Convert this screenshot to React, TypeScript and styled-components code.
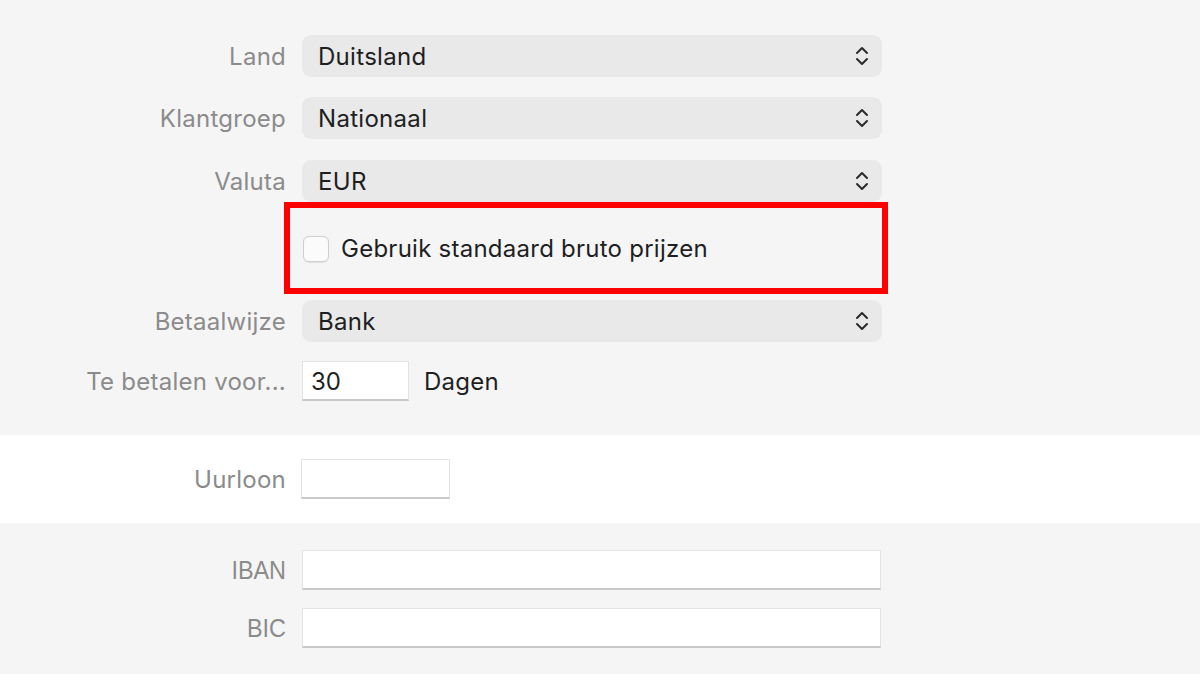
import React from "react";
import styled, { createGlobalStyle } from "styled-components";

const Global = createGlobalStyle`
  html, body { margin: 0; padding: 0; background: #f5f5f5; }
  body { font-family: Inter, "Noto Sans", sans-serif; -webkit-font-smoothing: antialiased; }
`;

const Page = styled.div`
  width: 1200px;
  height: 674px;
  overflow: hidden;
  display: flex;
  flex-direction: column;
`;

const Section = styled.section<{ $white?: boolean; $pt: number; $h: number }>`
  box-sizing: border-box;
  background: ${(p) => (p.$white ? "#ffffff" : "#f5f5f5")};
  padding-top: ${(p) => p.$pt}px;
  height: ${(p) => p.$h}px;
  display: flex;
  flex-direction: column;
`;

const Row = styled.div<{ $h: number; $mt?: number }>`
  display: grid;
  grid-template-columns: 286px 580px;
  column-gap: 16px;
  align-items: center;
  height: ${(p) => p.$h}px;
  margin-top: ${(p) => p.$mt ?? 0}px;
`;

const Label = styled.div`
  text-align: right;
  color: #8b8b8b;
  font-size: 24px;
  letter-spacing: 0.25px;
`;

const NarrowLabel = styled.div`
  text-align: right;
  color: #8b8b8b;
  font-family: "Liberation Sans", Arial, sans-serif;
  font-size: 26px;
  transform: scaleX(0.9);
  transform-origin: right center;
`;

const Select = styled.div`
  box-sizing: border-box;
  height: 42px;
  width: 580px;
  background: #e9e9e9;
  border-radius: 9px;
  display: flex;
  align-items: center;
  justify-content: space-between;
  padding: 0 12px 0 16px;
  font-size: 24px;
  color: #1f1f1f;
  letter-spacing: 0.3px;
`;

const Chevrons = styled.svg`
  width: 16px;
  height: 22px;
`;

const CheckRow = styled.div`
  display: flex;
  align-items: center;
  gap: 12px;
`;

const Highlight = styled.div`
  box-sizing: border-box;
  height: 92px;
  margin: 0 -6px 0 -18px;
  border: 6px solid #ff0000;
  display: flex;
  align-items: center;
  padding-left: 13px;
  padding-top: 1px;
`;

const CheckBox = styled.span`
  box-sizing: border-box;
  width: 26px;
  height: 26px;
  border-radius: 6px;
  border: 1px solid #cfcfcf;
  background: #fbfbfb;
  box-shadow: 0 0.5px 1px rgba(0, 0, 0, 0.08);
`;

const CheckText = styled.span`
  font-size: 24px;
  color: #1f1f1f;
  letter-spacing: 0.25px;
`;

const Input = styled.div<{ $w: number; $ml?: number }>`
  box-sizing: border-box;
  width: ${(p) => p.$w}px;
  margin-left: ${(p) => p.$ml ?? 0}px;
  height: 40px;
  background: #ffffff;
  border: 1px solid #e3e3e3;
  border-bottom: 2px solid #c9c9c9;
  display: flex;
  align-items: center;
  padding: 2px 0 0 8px;
  font-size: 24px;
  color: #1f1f1f;
`;

const Inline = styled.div`
  display: flex;
  align-items: center;
  gap: 15px;
`;

const Unit = styled.span`
  font-size: 24px;
  color: #1f1f1f;
  letter-spacing: 0.25px;
`;

const Chev = () => (
  <Chevrons viewBox="0 0 16 22" fill="none" stroke="#2b2b2b" strokeWidth="2" strokeLinecap="round" strokeLinejoin="round">
    <polyline points="3,8 8,3 13,8" />
    <polyline points="3,14 8,19 13,14" />
  </Chevrons>
);

const SelectField = ({ value }: { value: string }) => (
  <Select>
    <span>{value}</span>
    <Chev />
  </Select>
);

export default function App() {
  return (
    <Page>
      <Global />
      <Section $pt={35} $h={435}>
        <Row $h={42}>
          <Label>Land</Label>
          <SelectField value="Duitsland" />
        </Row>
        <Row $h={42} $mt={20}>
          <Label>Klantgroep</Label>
          <SelectField value="Nationaal" />
        </Row>
        <Row $h={42} $mt={21}>
          <Label>Valuta</Label>
          <SelectField value="EUR" />
        </Row>
        <Row $h={92}>
          <span />
          <Highlight>
            <CheckRow>
              <CheckBox />
              <CheckText>Gebruik standaard bruto prijzen</CheckText>
            </CheckRow>
          </Highlight>
        </Row>
        <Row $h={42} $mt={6}>
          <Label>Betaalwijze</Label>
          <SelectField value="Bank" />
        </Row>
        <Row $h={40} $mt={19}>
          <Label>Te betalen voor...</Label>
          <Inline>
            <Input $w={107}>30</Input>
            <Unit>Dagen</Unit>
          </Inline>
        </Row>
      </Section>
      <Section $white $pt={24} $h={88}>
        <Row $h={40}>
          <Label>Uurloon</Label>
          <Input $w={149} $ml={-1} />
        </Row>
      </Section>
      <Section $pt={27} $h={151}>
        <Row $h={40}>
          <NarrowLabel>IBAN</NarrowLabel>
          <Input $w={579} />
        </Row>
        <Row $h={40} $mt={18}>
          <NarrowLabel>BIC</NarrowLabel>
          <Input $w={579} />
        </Row>
      </Section>
    </Page>
  );
}
